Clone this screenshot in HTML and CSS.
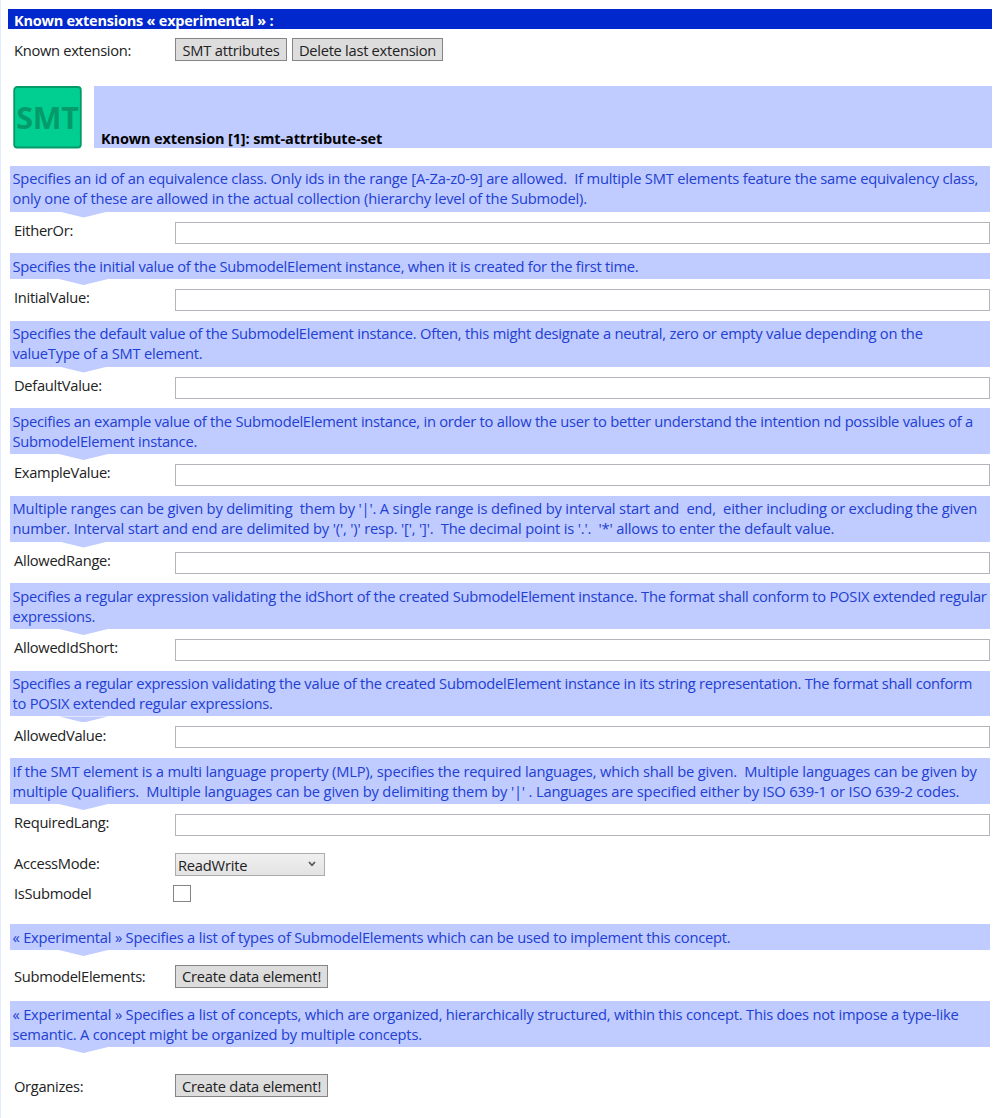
FILE: index.html
```html
<!DOCTYPE html>
<html lang="en">
<head>
<meta charset="utf-8">
<title>Known extensions</title>
<link rel="stylesheet" href="styles.css">
</head>
<body>
<main class="panel">
<h1 class="panel-title">Known extensions « experimental » :</h1>
<div class="row row-actions"><span class="label">Known extension:</span><button class="btn btn-smt">SMT attributes</button><button class="btn btn-delete">Delete last extension</button></div>
<header class="extension">
<svg class="badge" width="69" height="63" viewBox="0 0 69 63"><rect x="1.2" y="1" width="66.6" height="60.5" rx="3" fill="#00cf91" stroke="#049a69" stroke-width="1.8"/><text x="3.2" y="43" textLength="62.5" lengthAdjust="spacingAndGlyphs" class="badge-text">SMT</text></svg>
<h2 class="extension-title">Known extension [1]: smt-attrtibute-set</h2>
</header>
<section class="group"><p class="note">Specifies an id of an equivalence class. Only ids in the range [A-Za-z0-9] are allowed.  If multiple SMT elements feature the same equivalency class,<br>only one of these are allowed in the actual collection (hierarchy level of the Submodel).</p>
<div class="row"><label class="label" for="f1">EitherOr:</label><input class="field" id="f1"></div></section>
<section class="group"><p class="note note-tighter">Specifies the initial value of the SubmodelElement instance, when it is created for the first time.</p>
<div class="row"><label class="label" for="f2">InitialValue:</label><input class="field" id="f2"></div></section>
<section class="group"><p class="note note-tight">Specifies the default value of the SubmodelElement instance. Often, this might designate a neutral, zero or empty value depending on the<br>valueType of a SMT element.</p>
<div class="row"><label class="label" for="f3">DefaultValue:</label><input class="field" id="f3"></div></section>
<section class="group"><p class="note note-tightest">Specifies an example value of the SubmodelElement instance, in order to allow the user to better understand the intention nd possible values of a<br>SubmodelElement instance.</p>
<div class="row"><label class="label" for="f4">ExampleValue:</label><input class="field" id="f4"></div></section>
<section class="group"><p class="note note-loose">Multiple ranges can be given by delimiting  them by '|'. A single range is defined by interval start and  end,  either including or excluding the given<br>number. Interval start and end are delimited by '(', ')' resp. '[', ']'.  The decimal point is '.'.  '*' allows to enter the default value.</p>
<div class="row"><label class="label" for="f5">AllowedRange:</label><input class="field" id="f5"></div></section>
<section class="group"><p class="note note-tighter">Specifies a regular expression validating the idShort of the created SubmodelElement instance. The format shall conform to POSIX extended regular<br>expressions.</p>
<div class="row"><label class="label" for="f6">AllowedIdShort:</label><input class="field" id="f6"></div></section>
<section class="group"><p class="note note-tightest">Specifies a regular expression validating the value of the created SubmodelElement instance in its string representation. The format shall conform<br>to POSIX extended regular expressions.</p>
<div class="row"><label class="label" for="f7">AllowedValue:</label><input class="field" id="f7"></div></section>
<section class="group"><p class="note note-loose">If the SMT element is a multi language property (MLP), specifies the required languages, which shall be given.  Multiple languages can be given by<br>multiple Qualifiers.  Multiple languages can be given by delimiting them by '|' . Languages are specified either by ISO 639-1 or ISO 639-2 codes.</p>
<div class="row"><label class="label" for="f8">RequiredLang:</label><input class="field" id="f8"></div></section>
<div class="row row-select"><span class="label">AccessMode:</span><div class="select">ReadWrite<svg class="chevron" width="8" height="6" viewBox="0 0 8 6"><path d="M1 1l3 3.3L7 1" fill="none" stroke="#555" stroke-width="1.7"/></svg></div></div>
<div class="row row-check"><label class="label" for="sub">IsSubmodel</label><input type="checkbox" class="check" id="sub"></div>
<section class="group"><p class="note note-tight">« Experimental » Specifies a list of types of SubmodelElements which can be used to implement this concept.</p>
<div class="row row-elements"><span class="label">SubmodelElements:</span><button class="btn btn-create">Create data element!</button></div></section>
<section class="group"><p class="note note-tight">« Experimental » Specifies a list of concepts, which are organized, hierarchically structured, within this concept. This does not impose a type-like<br>semantic. A concept might be organized by multiple concepts.</p>
<div class="row row-organizes"><span class="label">Organizes:</span><button class="btn btn-create btn-low">Create data element!</button></div></section>
</main>
</body>
</html>
```

FILE: styles.css
```css
* { box-sizing: border-box; }
body { margin: 0; background: #fff; color: #222; font: 14.7px/20px "Open Sans", "Noto Sans", sans-serif; letter-spacing: -0.22px; }
.panel { height: 1118px; overflow: hidden; border-left: 1px solid #e3e9ff; padding: 9px 4px 0 7px; }
.panel-title { margin: 0; height: 20px; padding: 1px 6px 0; background: #0028cd; color: #fff; font-size: 14.5px; line-height: 21px; font-weight: 700; white-space: nowrap; }
.row { display: flex; align-items: flex-start; height: 41.5px; padding: 10px 2px 0 6px; white-space: nowrap; }
.label { width: 161px; flex: none; margin-top: -1.6px; letter-spacing: -0.3px; }
.row-actions { height: 57px; padding-top: 9px; }
.row-actions .label { margin-top: 2px; }
.btn { height: 23px; padding: 0; border: 1px solid #858585; background: #ddd; color: #222; font: inherit; letter-spacing: -0.22px; line-height: 21px; text-align: center; white-space: nowrap; }
.btn-smt { width: 112px; margin-right: 5px; padding-top: 1px; }
.btn-delete { width: 151px; padding-top: 1px; letter-spacing: -0.28px; }
.btn-create { width: 153px; }
.btn-low { padding-top: 1px; }
.extension { display: flex; gap: 12px; margin: 0 0 16.6px 5px; }
.badge { flex: none; display: block; }
.badge-text { font: 700 30px "Open Sans", sans-serif; fill: #049a69; }
.extension-title { flex: 1; height: 62px; margin: 0; padding: 43px 7px 0; background: #c0cbff; color: #000; font-size: 14.5px; letter-spacing: -0.13px; line-height: 20px; white-space: nowrap; }
.note { position: relative; margin: 0 2px; padding: 2.6px 2.5px 3.4px; background: #c0cbff; color: #2140d2; letter-spacing: -0.19px; white-space: pre; }
.note-loose { letter-spacing: -0.168px; }
.note-tight { letter-spacing: -0.218px; }
.note-tighter { letter-spacing: -0.237px; }
.note-tightest { letter-spacing: -0.248px; }
.note::after { content: ""; position: absolute; top: 100%; left: 49px; width: 49px; height: 6px; background: #c0cbff; clip-path: polygon(0 0, 100% 0, 50% 100%); }
.field { flex: 1; min-width: 0; height: 22px; padding: 0 3px; border: 1px solid #b4b5bb; background: #fff; font: inherit; }
.row-select { height: 36px; padding-top: 8px; }
.row-select .label { margin-top: -0.6px; }
.select { display: flex; justify-content: space-between; width: 150px; height: 23px; padding: 0.5px 8px 0 2px; border: 1px solid #acacac; background: linear-gradient(#f0f0f0, #e3e3e3); }
.chevron { margin-top: 6px; }
.row-check { height: 42.5px; padding-top: 4px; }
.row-check .label { width: 159px; margin-top: -2.5px; }
.check { appearance: none; width: 18px; height: 17px; margin: 0; border: 1px solid #858585; background: #fff; }
.row-elements { height: 51px; padding-top: 15px; }
.row-elements .label { margin-top: 0.9px; }
.row-organizes { height: 60px; padding-top: 27px; }
.row-organizes .label { margin-top: 2px; }
```
